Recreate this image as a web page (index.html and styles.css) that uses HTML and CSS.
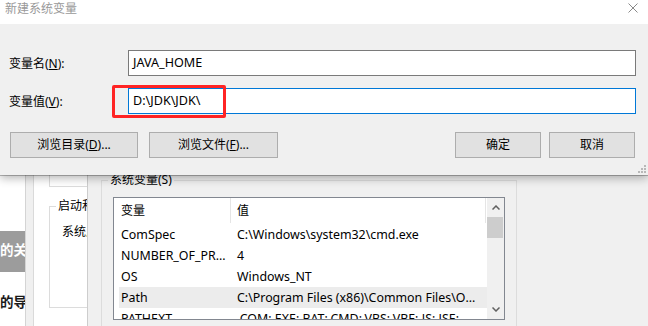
FILE: index.html
```html
<!DOCTYPE html>
<html lang="zh-CN">
<head>
<meta charset="utf-8">
<title>新建系统变量</title>
<link rel="stylesheet" href="styles.css">
</head>
<body>
<div class="screen">
  <div class="desk">
    <div class="web">
      <div class="web-band">的关</div>
      <div class="web-line">的导</div>
    </div>
    <div class="gutter"></div>
    <div class="tabpage">
      <div class="grp1"></div>
      <fieldset class="grp2">
        <legend>启动和故障恢复</legend>
        <div class="grp2-text">系统启动</div>
      </fieldset>
    </div>
    <div class="envdlg">
      <fieldset class="sysgrp">
        <legend>系统变量(S)</legend>
        <div class="list">
          <div class="list-main">
            <div class="hdr">
              <div class="hc1">变量</div>
              <div class="hc2">值</div>
            </div>
            <div class="row"><div class="rc1">ComSpec</div><div class="rc2">C:\Windows\system32\cmd.exe</div></div>
            <div class="row"><div class="rc1">NUMBER_OF_PROCESSORS</div><div class="rc2">4</div></div>
            <div class="row"><div class="rc1">OS</div><div class="rc2">Windows_NT</div></div>
            <div class="row sel"><div class="rc1">Path</div><div class="rc2">C:\Program Files (x86)\Common Files\Oracle\Java\javapath;C:\Windows</div></div>
            <div class="row"><div class="rc1">PATHEXT</div><div class="rc2">.COM;.EXE;.BAT;.CMD;.VBS;.VBE;.JS;.JSE;.WSF;.WSH;.MSC</div></div>
          </div>
          <div class="vs">
            <div class="vs-btn"><svg width="8" height="5" viewBox="0 0 8 5"><polyline points="0.5,4.5 4,1 7.5,4.5" fill="none" stroke="#606060" stroke-width="1.5"/></svg></div>
            <div class="vs-thumb"></div>
            <div class="vs-track"></div>
            <div class="vs-btn"><svg width="8" height="5" viewBox="0 0 8 5"><polyline points="0.5,0.5 4,4 7.5,0.5" fill="none" stroke="#606060" stroke-width="1.5"/></svg></div>
          </div>
        </div>
      </fieldset>
    </div>
  </div>

  <div class="dialog">
    <div class="titlebar">
      <span class="title">新建系统变量</span>
      <svg class="close" width="10" height="10" viewBox="0 0 10 10"><path d="M0.5 0.5 L9.5 9.5 M9.5 0.5 L0.5 9.5" stroke="#8a8a8a" stroke-width="1" fill="none"/></svg>
    </div>
    <div class="dbody">
      <div class="frow">
        <div class="flabel">变量名(<u>N</u>):</div>
        <div class="finput">JAVA_HOME</div>
      </div>
      <div class="frow">
        <div class="flabel">变量值(<u>V</u>):</div>
        <div class="finput focus">D:\JDK\JDK\</div>
      </div>
      <div class="btnrow">
        <div class="btn b1">浏览目录(<u>D</u>)...</div>
        <div class="btn b2">浏览文件(<u>F</u>)...</div>
        <div class="btn b3">确定</div>
        <div class="btn b4">取消</div>
      </div>
    </div>
    <svg class="grip" width="9" height="9" viewBox="0 0 9 9">
      <rect x="7" y="1" width="2" height="2" fill="#b8b8b8"/>
      <rect x="4" y="4" width="2" height="2" fill="#b8b8b8"/>
      <rect x="7" y="4" width="2" height="2" fill="#b8b8b8"/>
      <rect x="1" y="7" width="2" height="2" fill="#b8b8b8"/>
      <rect x="4" y="7" width="2" height="2" fill="#b8b8b8"/>
      <rect x="7" y="7" width="2" height="2" fill="#b8b8b8"/>
    </svg>
  </div>

  <div class="mark"></div>
</div>
</body>
</html>
```

FILE: styles.css
```css
* { box-sizing: border-box; margin: 0; padding: 0; }
html, body { width: 648px; height: 326px; overflow: hidden; }
body {
  font-family: "Noto Sans", "Noto Sans CJK SC", sans-serif;
  font-size: 12px;
  color: #000;
  background: #f0f0f0;
}
u { text-decoration: underline; text-underline-offset: 1px; }

.screen { position: relative; width: 648px; height: 326px; overflow: hidden; }

/* background windows */
.desk { display: flex; height: 326px; }

.web {
  width: 26px;
  flex-shrink: 0;
  background: #fff;
  border-right: 1px solid #d4d4d4;
  padding-top: 231px;
  overflow: hidden;
  white-space: nowrap;
  font-family: "Noto Sans CJK SC", sans-serif;
  font-weight: bold;
  font-size: 13.5px;
}
.web-band { height: 41px; background: #9c9c9c; color: #fff; line-height: 37px; }
.web-line { margin-top: 21px; line-height: 16px; color: #1a1a1a; }

.gutter { width: 7px; flex-shrink: 0; background: #f0f0f0; }

.tabpage {
  width: 55px;
  flex-shrink: 0;
  background: #fff;
  border-left: 1px solid #dadada;
  border-right: 1px solid #cdcdcd;
  padding: 120px 0 0 15px;
  overflow: hidden;
}
.grp1 {
  width: 200px;
  height: 67px;
  border: 1px solid #dcdcdc;
  border-top: none;
}
.grp2 {
  width: 200px;
  height: 109px;
  margin-top: 12px;
  border: 1px solid #dcdcdc;
  padding: 0;
  min-width: 0;
}
.grp2 legend { margin-left: 6px; padding: 0 2px; line-height: 14px; }
.grp2-text { margin: 12px 0 0 12px; line-height: 14px; white-space: nowrap; }

.envdlg {
  flex: 1;
  background: #f0f0f0;
  padding: 173px 0 0 13px;
  overflow: hidden;
}
.sysgrp {
  width: 416px;
  height: 220px;
  border: 1px solid #dcdcdc;
  padding: 10px 0 0 11px;
  min-width: 0;
}
.sysgrp legend { margin-left: -5px; padding: 0 2px; line-height: 14px; }

.list {
  display: flex;
  width: 392px;
  height: 123px;
  border: 1px solid #828790;
  background: #fff;
  overflow: hidden;
}
.list-main { flex: 1; min-width: 0; overflow: hidden; }
.hdr { display: flex; height: 26px; }
.hc1 { width: 117px; height: 25px; border-right: 1px solid #e5e5e5; padding-left: 7px; line-height: 26px; }
.hc2 { width: 255px; height: 25px; border-right: 1px solid #e5e5e5; padding-left: 6px; line-height: 26px; }
.row { display: flex; height: 21px; line-height: 21px; margin-left: 5px; white-space: nowrap; font-size: 12.4px; }
.row.sel { background: #ececec; }
.rc1 { width: 112px; flex-shrink: 0; padding: 0 3px 0 2px; overflow: hidden; text-overflow: ellipsis; }
.rc2 { flex: 1; min-width: 0; padding: 0 11px 0 6px; overflow: hidden; text-overflow: ellipsis; }

.vs { width: 17px; flex-shrink: 0; background: #f0f0f0; display: flex; flex-direction: column; }
.vs-btn { height: 19px; display: flex; align-items: center; justify-content: center; }
.vs-thumb { height: 21px; background: #cdcdcd; margin-right: 1px; }
.vs-track { flex: 1; }

/* the dialog on top */
.dialog {
  position: absolute;
  left: 0;
  top: 0;
  width: 648px;
  height: 175px;
  background: #f0f0f0;
  box-shadow: 0 1px 0 rgba(0,0,0,0.25), 0 3px 9px rgba(0,0,0,0.3);
  display: flex;
  flex-direction: column;
}
.titlebar {
  height: 24px;
  flex-shrink: 0;
  background: #fff;
  display: flex;
  align-items: flex-start;
  padding-left: 5px;
  color: #999;
  line-height: 18px;
}
.close { margin-left: auto; margin-right: 10px; margin-top: 3px; }
.dbody { padding: 26px 12px 0 9px; display: flex; flex-direction: column; }
.frow { display: flex; align-items: center; height: 26px; }
.frow + .frow { margin-top: 12px; }
.flabel { width: 119px; flex-shrink: 0; }
.finput {
  flex: 1;
  height: 26px;
  border: 1px solid #7a7a7a;
  background: #fff;
  padding-left: 4px;
  line-height: 24px;
  white-space: nowrap;
  font-size: 12.6px;
}
.finput.focus { border-color: #0078d7; }
.btnrow { display: flex; margin-top: 18px; padding: 0 1px; }
.btn {
  height: 26px;
  border: 1px solid #adadad;
  background: #e1e1e1;
  text-align: center;
  line-height: 24px;
  white-space: nowrap;
}
.b1 { width: 128px; }
.b2 { width: 129px; margin-left: 11px; }
.b3 { width: 86px; margin-left: auto; }
.b4 { width: 86px; margin-left: 8px; }
.grip { position: absolute; right: 2px; bottom: 2px; }

/* red annotation box */
.mark {
  position: absolute;
  left: 112px;
  top: 85px;
  width: 114px;
  height: 33px;
  border: 3px solid #ff2424;
  border-radius: 2px;
}
```
